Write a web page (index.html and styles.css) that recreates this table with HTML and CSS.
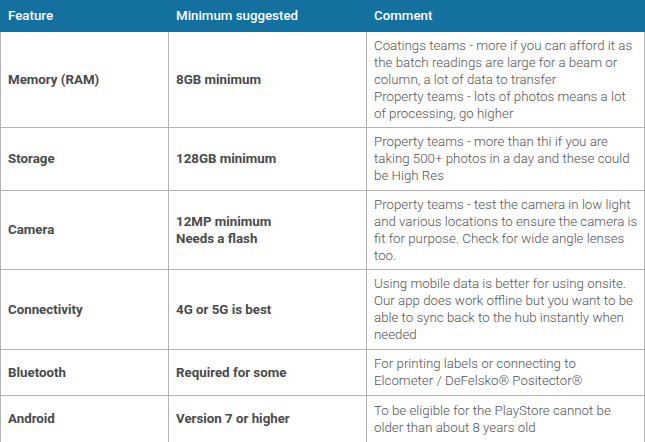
FILE: index.html
```html
<!DOCTYPE html>
<html>
<head>
<meta charset="utf-8">
<link rel="stylesheet" href="styles.css">
</head>
<body>
<table class="spec">
  <colgroup>
    <col class="c1"><col class="c2"><col class="c3">
  </colgroup>
  <thead>
    <tr><th>Feature</th><th>Minimum suggested</th><th>Comment</th></tr>
  </thead>
  <tbody>
    <tr class="r-mem">
      <td class="feat">Memory (RAM)</td>
      <td class="feat">8GB minimum</td>
      <td class="note">Coatings teams - more if you can afford it as the batch readings are large for a beam or column, a lot of data to transfer<br>Property teams - lots of photos means a lot of processing, go higher</td>
    </tr>
    <tr class="r-sto">
      <td class="feat">Storage</td>
      <td class="feat">128GB minimum</td>
      <td class="note">Property teams - more than thi if you are taking 500+ photos in a day and these could be High Res</td>
    </tr>
    <tr class="r-cam">
      <td class="feat">Camera</td>
      <td class="feat">12MP minimum<br>Needs a flash</td>
      <td class="note">Property teams - test the camera in low light and various locations to ensure the camera is fit for purpose. Check for wide angle lenses too.</td>
    </tr>
    <tr class="r-con">
      <td class="feat">Connectivity</td>
      <td class="feat">4G or 5G is best</td>
      <td class="note">Using mobile data is better for using onsite. Our app does work offline but you want to be able to sync back to the hub instantly when needed</td>
    </tr>
    <tr class="r-blu">
      <td class="feat">Bluetooth</td>
      <td class="feat">Required for some</td>
      <td class="note">For printing labels or connecting to Elcometer / DeFelsko® Positector®</td>
    </tr>
    <tr class="r-and">
      <td class="feat">Android</td>
      <td class="feat">Version 7 or higher</td>
      <td class="note">To be eligible for the PlayStore cannot be older than about 8 years old</td>
    </tr>
  </tbody>
</table>
</body>
</html>
```
FILE: styles.css
```css
html, body {
  margin: 0;
  padding: 0;
  background: #ffffff;
}
.spec {
  border-collapse: collapse;
  width: 644px;
  table-layout: fixed;
  font-family: Roboto, "Liberation Sans", sans-serif;
  font-size: 13.3px;
}
.c1 { width: 168px; }
.c2 { width: 198px; }
.c3 { width: 278px; }
.spec th {
  background: #13709f;
  color: #ffffff;
  font-weight: 500;
  text-align: left;
  height: 31px;
  padding: 0 6px 0 7px;
  border: 1px solid #13709f;
  border-left: 1px solid #b3b3b3;
  border-top: none;
  box-sizing: border-box;
}
.spec th:first-child { border-left: 1px solid #13709f; }
.spec td {
  border: 1px solid #b3b3b3;
  padding: 5px 6px 5px 7px;
  vertical-align: middle;
  line-height: 17px;
}
.feat {
  font-weight: 700;
  color: #4a4a4a;
}
.note {
  font-weight: 300;
  color: #555555;
  padding-left: 5px;
}
.r-mem td { height: 84px; }
.r-sto td { height: 52px; }
.r-cam td { height: 68px; }
.r-con td { height: 69px; }
.r-blu td { height: 35px; }
.r-and td { height: 36px; }
```
